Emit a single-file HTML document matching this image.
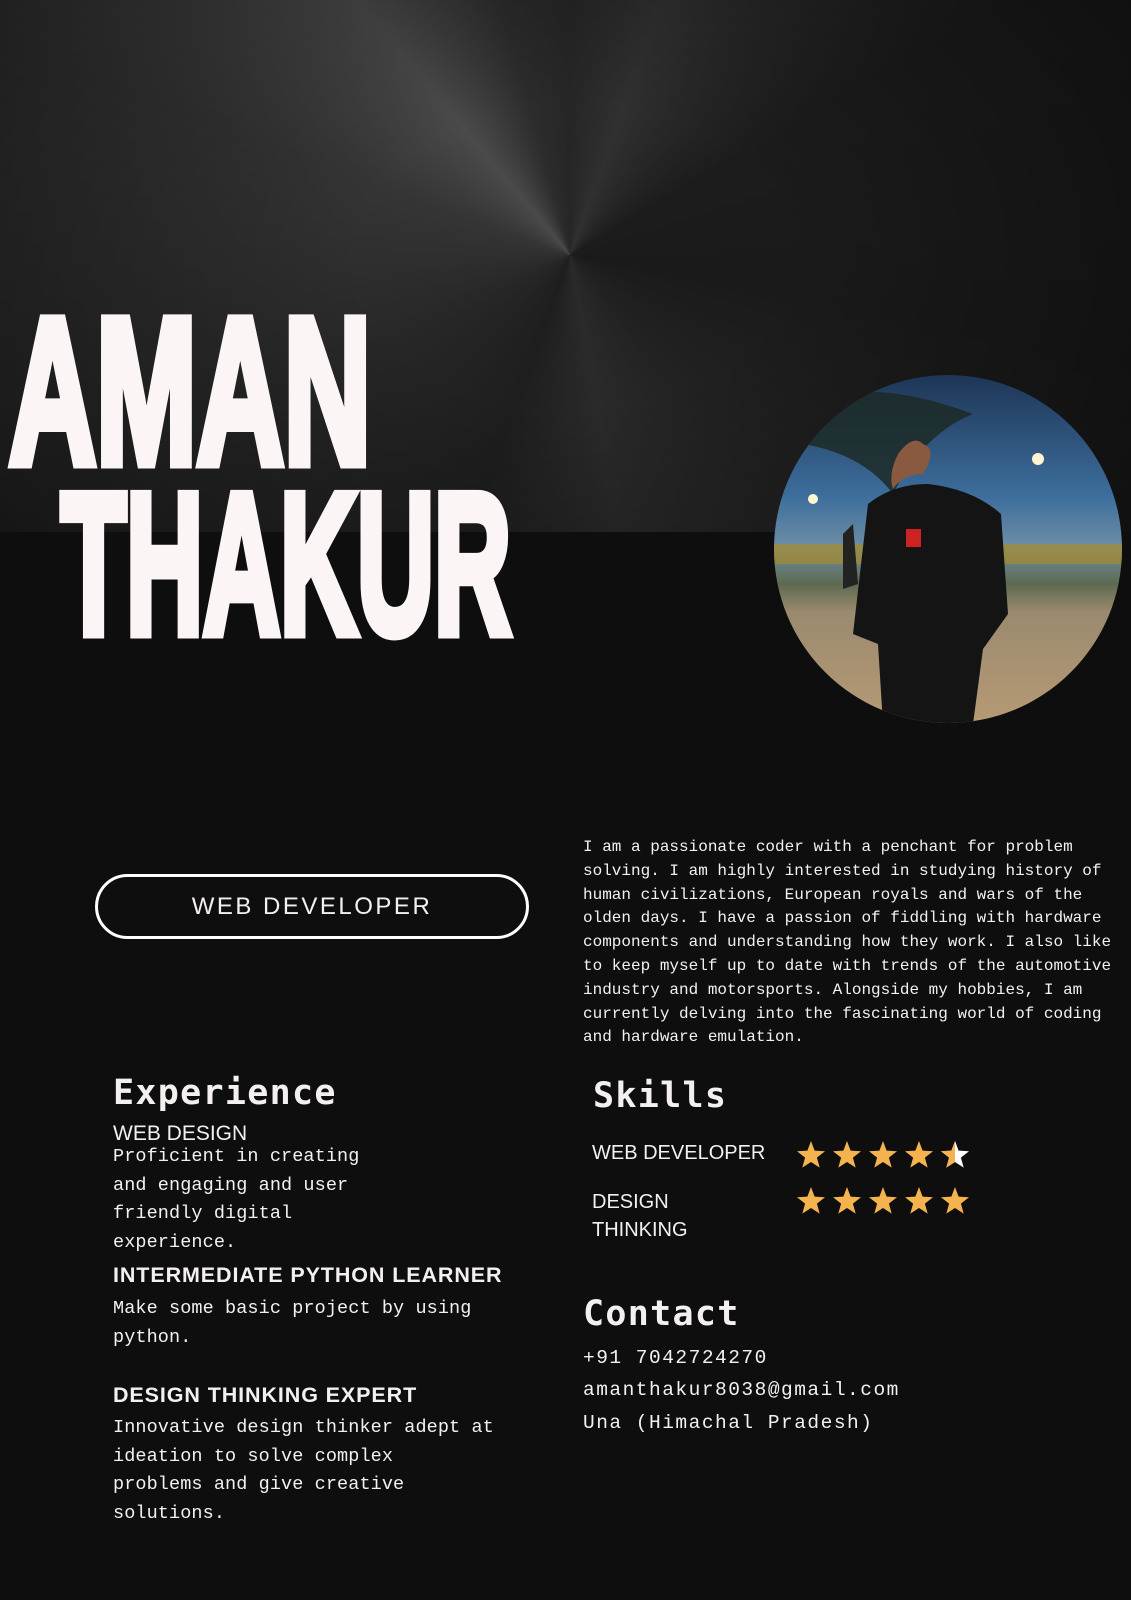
<!DOCTYPE html>
<html><head><meta charset="utf-8"><style>
*{margin:0;padding:0;box-sizing:border-box}
body{width:1131px;height:1600px;background:#0e0e0e;position:relative;overflow:hidden;font-family:"Liberation Sans",sans-serif;color:#f4f0f0}
.top{position:absolute;left:0;top:0;width:1131px;height:532px;
background:conic-gradient(from 0deg at 570px 255px,#262626 0deg,#303030 20deg,#1c1c1c 60deg,#1a1a1a 100deg,#222 140deg,#2a2a2a 170deg,#1e1e1e 200deg,#262626 240deg,#353535 290deg,#4a4a4a 320deg,#2c2c2c 345deg,#262626 360deg)}
.top:after{content:"";position:absolute;inset:0;background:radial-gradient(ellipse 700px 500px at 570px 255px,rgba(0,0,0,0) 30%,rgba(0,0,0,.45) 100%)}
.t{position:absolute;white-space:nowrap}
.h{font-weight:bold;font-size:35px;letter-spacing:1.3px;font-family:"DejaVu Sans Mono","Liberation Mono",monospace}
.m{font-family:"Liberation Mono",monospace}
.p{font-family:"Liberation Mono",monospace;font-size:18.5px;letter-spacing:.1px;line-height:28.5px}
.bio{font-family:"Liberation Mono",monospace;font-size:16px;line-height:23.8px}
.b{font-weight:bold;font-size:21.5px;letter-spacing:.9px}
</style></head><body>
<div class="top"></div>
<svg class="t" style="left:0;top:0" width="1131" height="700">
<g fill="#fbf5f6" stroke="#fbf5f6" stroke-width="11" stroke-linejoin="miter" font-family="Liberation Sans" font-weight="bold">
<text x="9" y="463" textLength="362" lengthAdjust="spacingAndGlyphs" font-size="208">AMAN</text>
<text x="61" y="633" textLength="450" lengthAdjust="spacingAndGlyphs" font-size="200">THAKUR</text>
</g></svg>
<svg class="t" style="left:773px;top:374px" width="350" height="350">
<defs><clipPath id="c"><circle cx="175" cy="175" r="174"/></clipPath>
<linearGradient id="sky" x1="0" y1="0" x2="0" y2="1"><stop offset="0" stop-color="#1d3556"/><stop offset=".35" stop-color="#3d6e9c"/><stop offset=".5" stop-color="#6f8fa6"/><stop offset=".6" stop-color="#5c6a50"/><stop offset=".68" stop-color="#9a8a6e"/><stop offset="1" stop-color="#b79a75"/></linearGradient></defs>
<g clip-path="url(#c)">
<rect width="350" height="350" fill="url(#sky)"/>
<path d="M60 20 Q120 10 200 40 Q150 60 120 120 Q90 80 30 70Z" fill="#1c2a26" opacity=".85"/>
<rect x="0" y="170" width="350" height="20" fill="#a58a2a" opacity=".7"/>
<circle cx="40" cy="125" r="5" fill="#fff6d0"/><circle cx="265" cy="85" r="6" fill="#fff6d0"/>
<path d="M120 115 Q130 100 150 100 Q165 75 150 70 Q140 60 125 80 Q115 100 120 115Z" fill="#8a5a40"/>
<path d="M95 130 Q120 110 155 110 Q200 115 228 140 L235 240 L210 275 L200 350 L110 350 L105 270 L80 260Z" fill="#141414"/>
<rect x="133" y="155" width="15" height="18" fill="#c22"/>
<path d="M70 160 L80 150 L85 210 L70 215Z" fill="#222"/>
</g></svg>
<div class="t" style="left:95px;top:874px;width:434px;height:65px;border:3px solid #fff;border-radius:33px;text-align:center;line-height:59px;font-size:24px;letter-spacing:2.5px">WEB DEVELOPER</div>
<div class="t bio" style="left:583px;top:836px">I am a passionate coder with a penchant for problem<br>solving. I am highly interested in studying history of<br>human civilizations, European royals and wars of the<br>olden days. I have a passion of fiddling with hardware<br>components and understanding how they work. I also like<br>to keep myself up to date with trends of the automotive<br>industry and motorsports. Alongside my hobbies, I am<br>currently delving into the fascinating world of coding<br>and hardware emulation.</div>
<div class="t h" style="left:113px;top:1073px">Experience</div>
<div class="t" style="left:113px;top:1122px;font-size:21px">WEB DESIGN</div>
<div class="t p" style="left:113px;top:1143px">Proficient in creating<br>and engaging and user<br>friendly digital<br>experience.</div>
<div class="t b" style="left:113px;top:1263px">INTERMEDIATE PYTHON LEARNER</div>
<div class="t p" style="left:113px;top:1295px">Make some basic project by using<br>python.</div>
<div class="t b" style="left:113px;top:1383px">DESIGN THINKING EXPERT</div>
<div class="t p" style="left:113px;top:1414px">Innovative design thinker adept at<br>ideation to solve complex<br>problems and give creative<br>solutions.</div>
<div class="t h" style="left:593px;top:1076px">Skills</div>
<div class="t" style="left:592px;top:1142px;font-size:20px">WEB DEVELOPER</div>
<div class="t" style="left:592px;top:1188px;font-size:20px;line-height:28px">DESIGN<br>THINKING</div>
<svg class="t" style="left:797px;top:1139px" width="180" height="80">
<defs><path id="s" d="M14 0 L17.6 9.6 L28 10.2 L19.9 16.6 L22.7 26.6 L14 21 L5.3 26.6 L8.1 16.6 L0 10.2 L10.4 9.6Z"/>
<clipPath id="hl"><rect x="0" y="0" width="14" height="30"/></clipPath></defs>
<g fill="#f5b34f"><use href="#s" x="0" y="2"/><use href="#s" x="36" y="2"/><use href="#s" x="72" y="2"/><use href="#s" x="108" y="2"/>
<use href="#s" x="144" y="2" fill="#fff"/>
<g transform="translate(144,2)"><use href="#s" clip-path="url(#hl)"/></g>
<use href="#s" x="0" y="48"/><use href="#s" x="36" y="48"/><use href="#s" x="72" y="48"/><use href="#s" x="108" y="48"/><use href="#s" x="144" y="48"/></g>
</svg>
<div class="t h" style="left:583px;top:1294px">Contact</div>
<div class="t m" style="left:583px;top:1347px;font-size:19.5px;letter-spacing:1.5px">+91 7042724270</div>
<div class="t m" style="left:583px;top:1379px;font-size:19.5px;letter-spacing:1.5px">amanthakur8038@gmail.com</div>
<div class="t m" style="left:583px;top:1412px;font-size:19.5px;letter-spacing:1.5px">Una (Himachal Pradesh)</div>
</body></html>
